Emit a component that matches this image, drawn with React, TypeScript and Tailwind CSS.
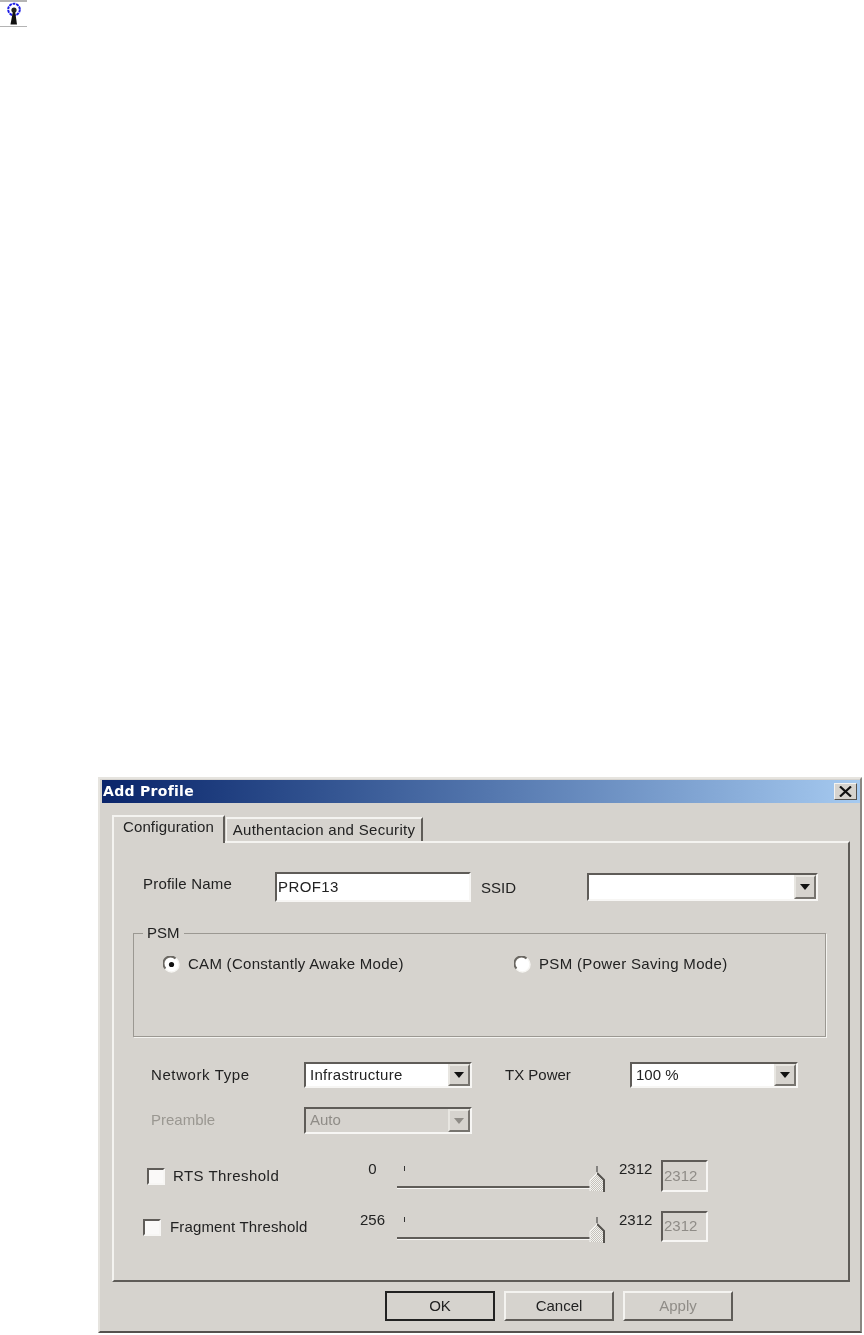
import React from 'react';

const sunken = 'border-2 border-t-[#5f5c58] border-l-[#5f5c58] border-b-[#f7f6f4] border-r-[#f7f6f4]';

const Combo = ({ value, width, height, disabled, spacing }: { value: string; width: string; height: string; disabled?: boolean; spacing?: string }) => (
  <div className={`flex ${width} ${height} ${sunken} ${disabled ? 'bg-[#d6d3ce] text-[#8f8c87]' : 'bg-white text-[#222222]'}`}>
    <div className={`flex-1 flex items-center pl-1 text-[15px] ${spacing ?? ''}`}>{value}</div>
    <div className="w-[22px] flex items-center justify-center bg-[#d6d3ce] border-2 border-t-[#e8e6e1] border-l-[#e8e6e1] border-b-[#77746f] border-r-[#77746f]">
      <svg width="10" height="6" viewBox="0 0 10 6">
        <path d="M0 0H10L5 6Z" fill={disabled ? '#8f8c87' : '#111111'} />
      </svg>
    </div>
  </div>
);

const Radio = ({ checked }: { checked?: boolean }) => (
  <svg width="17" height="17" viewBox="0 0 17 17" className="shrink-0">
    <circle cx="8.5" cy="8.5" r="7.5" fill="#ffffff" stroke="#f6f5f2" strokeWidth="1.5" />
    <path d="M2.5 12.5A7 7 0 0 1 12.5 2.5" fill="none" stroke="#6a6762" strokeWidth="2" />
    {checked && <circle cx="8.5" cy="8.5" r="2.6" fill="#111111" />}
  </svg>
);

const Check = () => (
  <div className={`w-[18px] h-[17px] bg-[#faf9f8] ${sunken}`}></div>
);

const Slider = () => (
  <div className="relative w-[208px] h-[32px] shrink-0">
    <div className="absolute left-[7px] top-[6px] w-px h-[5px] bg-[#333333]"></div>
    <div className="absolute left-0 top-[26px] w-[193px] h-[3px] border-t-2 border-[#5f5c58] bg-[#f7f6f4]"></div>
    <svg width="16" height="26" viewBox="0 0 16 26" className="absolute left-[192px] top-[6px]">
      <defs>
        <pattern id="dither" width="2" height="2" patternUnits="userSpaceOnUse">
          <rect width="2" height="2" fill="#f4f3f0" />
          <rect width="1" height="1" fill="#c4c1ba" />
          <rect x="1" y="1" width="1" height="1" fill="#c4c1ba" />
        </pattern>
      </defs>
      <path d="M8 0V6" stroke="#333333" strokeWidth="1" />
      <path d="M1 14L8 7L14 14V25H1Z" fill="url(#dither)" />
      <path d="M8 7L15 14V26" fill="none" stroke="#55524e" strokeWidth="2" />
      <path d="M1 25V14L8 7" fill="none" stroke="#f4f3f0" strokeWidth="1" />
    </svg>
  </div>
);

const ValueBox = ({ height }: { height: string }) => (
  <div className={`w-[47px] ${height} flex items-center pl-[1px] text-[15px] text-[#8f8c87] ${sunken}`}>2312</div>
);

const ThresholdRow = ({ label, min, pad, col, height, top, gap, spacing }: { label: string; min: string; pad: string; col: string; height: string; top: string; gap: string; spacing: string }) => (
  <div className={`flex items-start ${pad} ${top}`}>
    <div className={`flex items-center ${col} mt-[8px] h-[17px] shrink-0`}>
      <Check />
      <span className={`${gap} text-[15px] ${spacing}`}>{label}</span>
    </div>
    <div className="w-[35px] shrink-0 text-center text-[15px] leading-[17px]">{min}</div>
    <div className="ml-[7px]"><Slider /></div>
    <div className="w-[42px] ml-[14px] text-[15px] leading-[17px]">2312</div>
    <ValueBox height={height} />
  </div>
);

const Button = ({ label, isDefault, disabled }: { label: string; isDefault?: boolean; disabled?: boolean }) => (
  <div className={`w-[110px] h-[30px] flex items-center justify-center text-[15px] bg-[#d6d3ce] border-2 ${
    isDefault
      ? 'border-[#222222]'
      : 'border-t-[#f4f3f0] border-l-[#f4f3f0] border-b-[#5f5c58] border-r-[#5f5c58]'
  } ${disabled ? 'text-[#8f8c87]' : 'text-[#222222]'}`}>
    {label}
  </div>
);

export default function App() {
  return (
    <div className="w-[864px] h-[1335px] bg-white overflow-hidden font-['Liberation_Sans',Arial,sans-serif] text-[#222222]">
      <div className="w-[27px] h-[27px] border-t-2 border-b border-[#b4b4b4]">
        <svg width="27" height="24" viewBox="0 0 27 24">
          <circle cx="14" cy="7.5" r="5.8" fill="#ffffff" stroke="#1c1ce6" strokeWidth="2" strokeDasharray="2.8 0.8" />
          <circle cx="14" cy="8" r="2.6" fill="#222222" />
          <path d="M12.8 10H15.2L17 22.5H10.5Z" fill="#111111" />
        </svg>
      </div>

      <div className="ml-[98px] mt-[750px] w-[764px] h-[556px] bg-[#d6d3ce] border-2 border-t-[#e6e4df] border-l-[#e6e4df] border-b-[#55524e] border-r-[#8a8782] pl-[2px] pt-px blur-[0.35px]">
        <div className="h-[23px] flex items-center justify-between pl-[1px] pr-[3px] bg-gradient-to-r from-[#0a246a] to-[#a6caf0]">
          <span className="text-white font-bold text-[14px] tracking-[0.3px] font-['DejaVu_Sans',sans-serif]">Add Profile</span>
          <div className="w-[23px] h-[17px] flex items-center justify-center bg-[#d6d3ce] border border-t-[#f4f3f0] border-l-[#f4f3f0] border-b-[#55524e] border-r-[#55524e]">
            <svg width="13" height="11" viewBox="0 0 13 11">
              <path d="M1 0.5L12 10.5M12 0.5L1 10.5" stroke="#111111" strokeWidth="2.2" />
            </svg>
          </div>
        </div>

        <div className="ml-[10px] mt-[12px] flex items-end h-[26px]">
          <div className="w-[113px] h-[28px] -mb-[2px] z-10 relative flex items-center justify-center bg-[#d6d3ce] border-l-2 border-t-2 border-r-2 border-t-[#f4f3f0] border-l-[#f4f3f0] border-r-[#5f5c58] text-[15px] tracking-[0.15px] pb-[5px]">
            Configuration
          </div>
          <div className="w-[197px] h-[24px] ml-px flex items-center justify-center border-l border-t-2 border-r-2 border-t-[#f4f3f0] border-l-[#f4f3f0] border-r-[#5f5c58] text-[15px] tracking-[0.3px]">
            Authentacion and Security
          </div>
        </div>

        <div className="ml-[10px] w-[738px] h-[441px] border-2 border-t-[#f4f3f0] border-l-[#f4f3f0] border-b-[#5f5c58] border-r-[#5f5c58]">
          <div className="flex items-center h-[30px] mt-[29px] pl-[29px]">
            <span className="w-[132px] text-[15px] tracking-[0.2px] pb-[6px]">Profile Name</span>
            <div className={`w-[196px] h-[30px] flex items-center pl-[1px] bg-white text-[15px] tracking-[0.4px] ${sunken}`}>PROF13</div>
            <span className="ml-[10px] w-[106px] text-[15px] pt-[2px]">SSID</span>
            <Combo value="" width="w-[231px]" height="h-[28px]" />
          </div>

          <div className="relative ml-[19px] mt-[31px] w-[693px] h-[104px] border border-[#9b9892] shadow-[1px_1px_0_#f4f3f0]">
            <span className="absolute -top-[11px] left-[9px] px-1 bg-[#d6d3ce] text-[15px] leading-[20px]">PSM</span>
            <div className="flex items-center h-[17px] mt-[22px] pl-[29px]">
              <Radio checked />
              <span className="ml-2 w-[326px] text-[15px] tracking-[0.28px]">CAM (Constantly Awake Mode)</span>
              <Radio />
              <span className="ml-2 text-[15px] tracking-[0.33px]">PSM (Power Saving Mode)</span>
            </div>
          </div>

          <div className="flex items-center h-[26px] mt-[25px] pl-[37px]">
            <span className="w-[153px] text-[15px] tracking-[0.6px]">Network Type</span>
            <Combo value="Infrastructure" width="w-[168px]" height="h-[26px]" spacing="tracking-[0.3px]" />
            <span className="ml-[33px] w-[125px] text-[15px]">TX Power</span>
            <Combo value="100 %" width="w-[168px]" height="h-[26px]" />
          </div>

          <div className="flex items-center h-[27px] mt-[19px] pl-[37px]">
            <span className="w-[153px] text-[15px] text-[#9a9791]">Preamble</span>
            <Combo value="Auto" width="w-[168px]" height="h-[27px]" disabled />
          </div>

          <ThresholdRow label="RTS Threshold" min="0" pad="pl-[33px]" col="w-[208px]" height="h-[32px]" top="mt-[26px]" gap="ml-2" spacing="tracking-[0.45px]" />
          <ThresholdRow label="Fragment Threshold" min="256" pad="pl-[29px]" col="w-[212px]" height="h-[31px]" top="mt-[19px]" gap="ml-[9px]" spacing="tracking-[0.15px]" />
        </div>

        <div className="flex gap-[9px] ml-[283px] mt-[9px]">
          <Button label="OK" isDefault />
          <Button label="Cancel" />
          <Button label="Apply" disabled />
        </div>
      </div>
    </div>
  );
}
